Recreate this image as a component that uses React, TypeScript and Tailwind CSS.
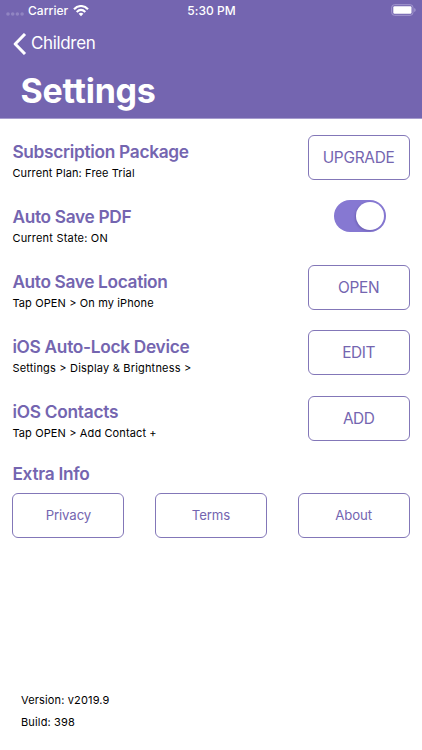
import type { ReactNode } from 'react';

const outline =
  'flex shrink-0 items-center justify-center rounded-[6px] border border-[#8377b8] text-[#7465b0]';

function Row({ title, detail, titleClass, detailClass, children }: {
  title: string;
  detail: string;
  titleClass: string;
  detailClass: string;
  children: ReactNode;
}) {
  return (
    <section className="flex h-[65.15px] items-start justify-between">
      <div className="whitespace-nowrap pt-[4.6px]">
        <h2 className={`text-[17.3px] leading-[24px] font-semibold text-[#7465b0] ${titleClass}`}>{title}</h2>
        <p className={`mt-[1.3px] text-[11px] leading-[16px] text-black ${detailClass}`}>{detail}</p>
      </div>
      {children}
    </section>
  );
}

function Action({ label, className }: { label: string; className: string }) {
  return <button className={`${outline} h-[45px] w-[102px] text-[15.4px] ${className}`}>{label}</button>;
}

function Link({ label, className }: { label: string; className: string }) {
  return <button className={`${outline} h-[45px] w-[112px] pt-px text-[13.2px] ${className}`}>{label}</button>;
}

export default function App() {
  return (
    <div className="flex h-[750px] w-[422px] flex-col overflow-hidden bg-white font-['Inter','Liberation_Sans',sans-serif]">
      <header className="h-[119px] shrink-0 border-b border-[#a69cce] bg-[#7465b0] text-white">
        <div className="grid h-[21px] grid-cols-3 items-center pl-[6px] pr-[5px] text-[12px]">
          <div className="flex items-center">
            <svg width="19" height="10" viewBox="0 0 19 10" fill="#9185c2">
              <circle cx="2" cy="8" r="1.8" />
              <circle cx="6.7" cy="8" r="1.8" />
              <circle cx="11.4" cy="8" r="1.8" />
              <circle cx="16.1" cy="8" r="1.8" />
            </svg>
            <span className="ml-[3px] font-medium tracking-[0.05px]">Carrier</span>
            <svg className="ml-[5px]" width="16" height="12" viewBox="0 0 16 12" fill="none" stroke="white" strokeWidth="2.1">
              <path d="M1 4.3C5 -.1 11 -.1 15 4.3" />
              <path d="M3.7 7C6.3 4.5 9.7 4.5 12.3 7" />
              <path d="M5.6 8.8Q8 6.9 10.4 8.8L8 11.3Z" fill="white" stroke="none" />
            </svg>
          </div>
          <span className="text-center font-medium tracking-[0.05px]">5:30 PM</span>
          <svg className="-mt-px justify-self-end" width="26" height="12" viewBox="0 0 26 12">
            <rect x=".7" y=".7" width="21.3" height="10.6" rx="2.8" fill="none" stroke="#a499cf" />
            <rect x="2.3" y="2.2" width="18.2" height="7.6" rx="1.2" fill="white" />
            <path d="M23.2 4Q24.7 4.5 24.7 6T23.2 8Z" fill="#a499cf" />
          </svg>
        </div>
        <button className="flex h-[45px] items-center pl-[13px] text-[17px]">
          <svg width="14" height="22" viewBox="0 0 14 22" fill="none" stroke="white" strokeWidth="3" strokeLinejoin="round">
            <path d="M12 1L2.2 11L12 21" />
          </svg>
          <span className="ml-1 pt-px tracking-[-0.35px]">Children</span>
        </button>
        <h1 className="pl-[20.5px] pt-px text-[34px] leading-[48px] font-bold tracking-[-0.25px]">Settings</h1>
      </header>
      <main className="px-[12.4px] pt-4">
        <Row title="Subscription Package" detail="Current Plan: Free Trial" titleClass="tracking-[-0.3px]" detailClass="tracking-[0.12px]">
          <Action label="UPGRADE" className="tracking-[-0.25px]" />
        </Row>
        <Row title="Auto Save PDF" detail="Current State: ON" titleClass="tracking-[-0.32px]" detailClass="tracking-[0.2px]">
          <button role="switch" aria-checked="true" aria-label="Auto Save PDF" className="mr-6 flex h-8 w-[52px] items-center justify-end rounded-full bg-[#8678d2] px-[2px]">
            <span className="h-7 w-7 rounded-full bg-white shadow-[-1px_1px_2px_rgba(45,30,100,.25)]" />
          </button>
        </Row>
        <Row title="Auto Save Location" detail="Tap OPEN > On my iPhone" titleClass="tracking-[-0.35px]" detailClass="tracking-[0.12px]">
          <Action label="OPEN" className="tracking-[-0.3px]" />
        </Row>
        <Row title="iOS Auto-Lock Device" detail="Settings > Display & Brightness >" titleClass="tracking-[-0.3px]" detailClass="tracking-[0.19px]">
          <Action label="EDIT" className="tracking-[-0.4px]" />
        </Row>
        <Row title="iOS Contacts" detail="Tap OPEN > Add Contact +" titleClass="tracking-[-0.25px]" detailClass="tracking-[0.12px]">
          <Action label="ADD" className="tracking-[-0.5px]" />
        </Row>
        <h2 className="text-[17.3px] leading-[26px] font-semibold tracking-[-0.27px] text-[#7465b0]">Extra Info</h2>
        <nav className="mt-[6.2px] flex justify-between">
          <Link label="Privacy" className="tracking-[-0.1px]" />
          <Link label="Terms" className="tracking-[-0.1px]" />
          <Link label="About" className="tracking-[-0.1px]" />
        </nav>
      </main>
      <footer className="mt-auto pb-[17px] pl-[21px] text-[11px] leading-[22px] tracking-[0.15px] text-black">
        <p>Version: v2019.9</p>
        <p>Build: 398</p>
      </footer>
    </div>
  );
}
